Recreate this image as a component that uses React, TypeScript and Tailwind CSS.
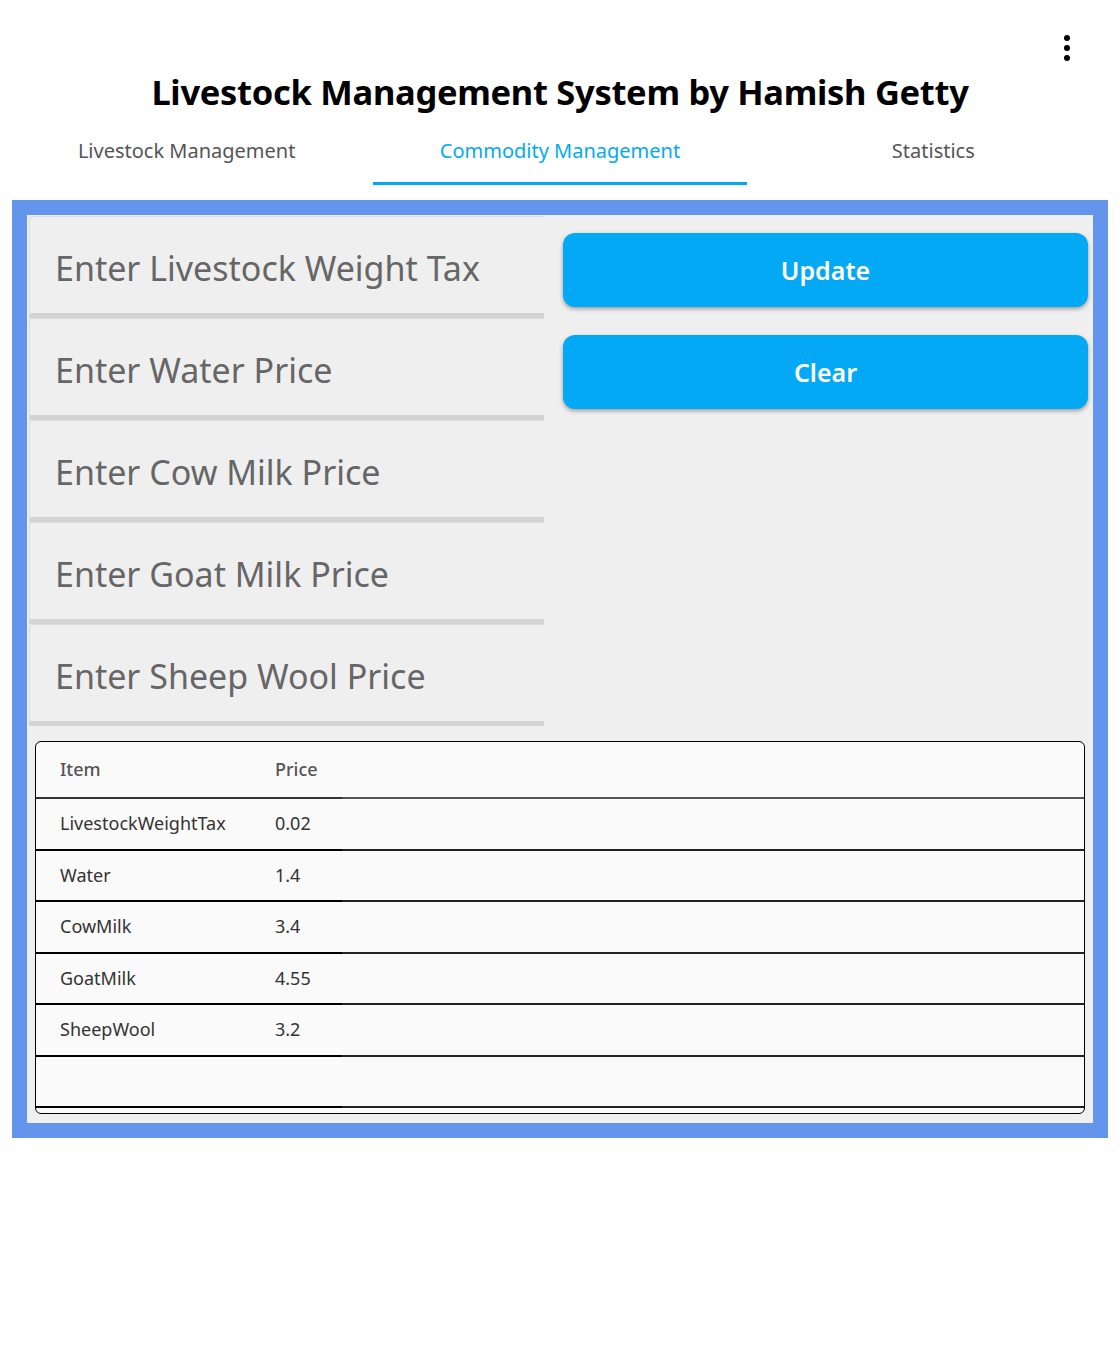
const font = { fontFamily: '"Noto Sans", "Open Sans", sans-serif' };

const fields = [
    "Enter Livestock Weight Tax",
    "Enter Water Price",
    "Enter Cow Milk Price",
    "Enter Goat Milk Price",
    "Enter Sheep Wool Price",
];

const rows = [
    ["LivestockWeightTax", "0.02"],
    ["Water", "1.4"],
    ["CowMilk", "3.4"],
    ["GoatMilk", "4.55"],
    ["SheepWool", "3.2"],
    ["", ""],
];

function Tab({ label, active }: { label: string; active?: boolean }) {
    return (
        <div className={"flex-1 h-[65px] flex items-center justify-center border-b-[3px] " + (active ? "border-[#03a9f4] text-[#03a9f4]" : "border-transparent text-[#555555]")}>
            <span className="text-[20px] pb-[1px]">{label}</span>
        </div>
    );
}

export default function App() {
    return (
        <div className="w-[1120px] min-h-[1356px] bg-white" style={font}>
            <header className="relative pt-[68px] pb-[15px]">
                <button className="absolute right-[44px] top-[34px] w-[18px] h-[28px] flex flex-col items-center justify-center gap-[4px]">
                    <span className="block w-[6px] h-[6px] rounded-full bg-black" />
                    <span className="block w-[6px] h-[6px] rounded-full bg-black" />
                    <span className="block w-[6px] h-[6px] rounded-full bg-black" />
                </button>
                <h1 className="text-center text-[34.5px] leading-[48px] font-bold text-black tracking-[-0.3px]">
                    Livestock Management System by Hamish Getty
                </h1>
                <nav className="flex mt-[4px]">
                    <Tab label="Livestock Management" />
                    <Tab label="Commodity Management" active />
                    <Tab label="Statistics" />
                </nav>
            </header>

            <main className="mx-[12px] border-[15px] border-[#6495ed] bg-[#efefef]">
                <div className="flex">
                    <div className="w-[517px] pl-[2px] pt-[1px]">
                        {fields.map((f) => (
                            <div key={f} className="h-[102px] border-l border-t border-[#dcdcdc] rounded-tl-[4px] border-b-[5px] border-b-[#d3d3d3] flex items-center pl-[25px]">
                                <span className="text-[34px] text-[#666666] pt-[6px]">{f}</span>
                            </div>
                        ))}
                    </div>
                    <div className="flex-1 pl-[19px] pr-[5px] pt-[18px] flex flex-col gap-[28px]">
                        <button className="h-[74px] rounded-[12px] bg-[#03a9f4] text-white text-[25px] font-semibold pt-[2px] shadow-[0_2px_4px_rgba(0,0,0,0.35)]">
                            Update
                        </button>
                        <button className="h-[74px] rounded-[12px] bg-[#03a9f4] text-white text-[25px] font-semibold pt-[2px] shadow-[0_2px_4px_rgba(0,0,0,0.35)]">
                            Clear
                        </button>
                    </div>
                </div>

                <div className="mx-[8px] mt-[15px] mb-[9px] border border-black rounded-[6px] bg-[#fafafa] overflow-hidden">
                    <table className="w-full border-collapse text-[18px]">
                        <thead>
                            <tr className="h-[56px] text-[#555555] font-medium">
                                <th className="w-[239px] text-left pl-[24px] font-medium border-b-2 border-[#333333]">Item</th>
                                <th className="w-[67px] text-left font-medium border-b-2 border-[#333333]">Price</th>
                                <th className="border-b-2 border-[#555555]"></th>
                            </tr>
                        </thead>
                        <tbody>
                            {rows.map((r, i) => (
                                <tr key={i} className="h-[51.5px] text-[#333333]">
                                    <td className="pl-[24px] border-b-2 border-black">{r[0]}</td>
                                    <td className="border-b-2 border-black">{r[1]}</td>
                                    <td className="border-b-2 border-[#222222]"></td>
                                </tr>
                            ))}
                            <tr className="h-[6px]">
                                <td colSpan={3}></td>
                            </tr>
                        </tbody>
                    </table>
                </div>
            </main>
        </div>
    );
}
